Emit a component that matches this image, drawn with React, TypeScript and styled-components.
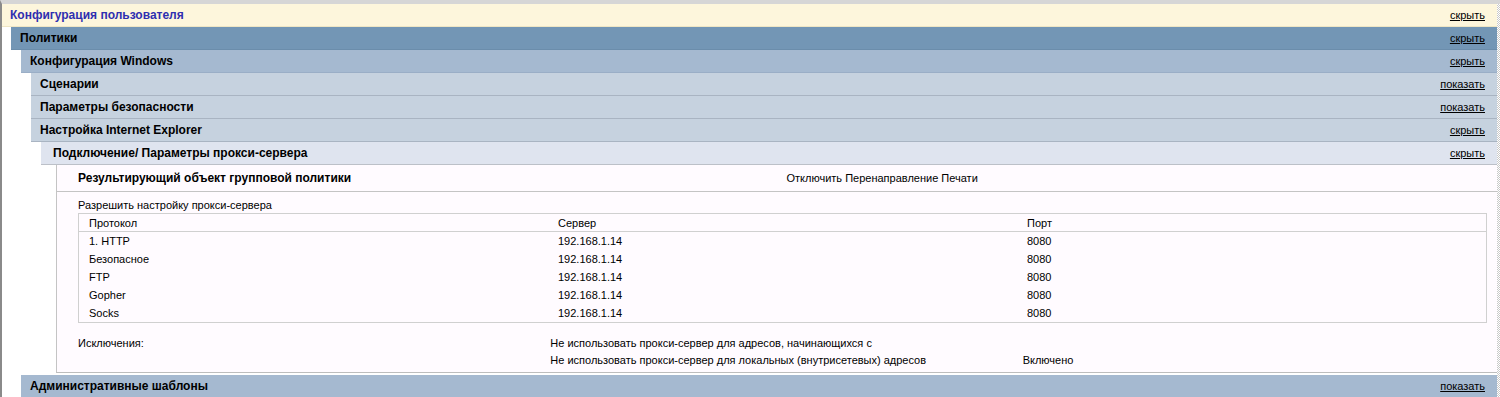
import React from "react";
import styled, { createGlobalStyle } from "styled-components";

type Level = "root" | "policy" | "windows" | "group" | "leaf";

interface HeaderTheme {
	bg: string;
	line: string;
	pad: number;
	color: string;
}

const headerThemes: Record<Level, HeaderTheme> = {
	root: { bg: "#fdf6dc", line: "#efe6c4", pad: 8, color: "#2f2fb0" },
	policy: { bg: "#7396b5", line: "#6b8dab", pad: 9, color: "#000" },
	windows: { bg: "#a5b9d0", line: "#9aaec6", pad: 9, color: "#000" },
	group: { bg: "#c6d2df", line: "#a9b4c2", pad: 9, color: "#000" },
	leaf: { bg: "#dfe4ef", line: "#bcc0c8", pad: 12, color: "#000" },
};

const proxies = [
	{ protocol: "1. HTTP", server: "192.168.1.14", port: "8080" },
	{ protocol: "Безопасное", server: "192.168.1.14", port: "8080" },
	{ protocol: "FTP", server: "192.168.1.14", port: "8080" },
	{ protocol: "Gopher", server: "192.168.1.14", port: "8080" },
	{ protocol: "Socks", server: "192.168.1.14", port: "8080" },
];

const SectionHeader: React.FC<{ level: Level; title: string; open: boolean }> = ({
	level,
	title,
	open,
}) => (
	<Header $level={level}>
		<HeaderTitle $level={level}>{title}</HeaderTitle>
		<ToggleLink href="#">{open ? "скрыть" : "показать"}</ToggleLink>
	</Header>
);

const ProxySettings: React.FC = () => (
	<Details>
		<ResultRow>
			<ResultLabel>Результирующий объект групповой политики</ResultLabel>
			<span>Отключить Перенаправление Печати</span>
		</ResultRow>
		<Settings>
			<SettingLabel>Разрешить настройку прокси-сервера</SettingLabel>
			<Table>
				<TableHead>
					<Cell>Протокол</Cell>
					<Cell>Сервер</Cell>
					<Cell>Порт</Cell>
				</TableHead>
				{proxies.map((p) => (
					<TableRow key={p.protocol}>
						<Cell>{p.protocol}</Cell>
						<Cell>{p.server}</Cell>
						<Cell>{p.port}</Cell>
					</TableRow>
				))}
			</Table>
			<Exceptions>
				<span>Исключения:</span>
				<span>Не использовать прокси-сервер для адресов, начинающихся с</span>
				<span />
				<span />
				<span>Не использовать прокси-сервер для локальных (внутрисетевых) адресов</span>
				<span>Включено</span>
			</Exceptions>
		</Settings>
	</Details>
);

const App: React.FC = () => (
	<>
		<GlobalStyle />
		<Frame>
			<Main>
				<SectionHeader level="root" title="Конфигурация пользователя" open />
				<Nested $indent={9}>
					<SectionHeader level="policy" title="Политики" open />
					<Nested $indent={10}>
						<SectionHeader level="windows" title="Конфигурация Windows" open />
						<Nested $indent={10}>
							<SectionHeader level="group" title="Сценарии" open={false} />
							<SectionHeader level="group" title="Параметры безопасности" open={false} />
							<SectionHeader level="group" title="Настройка Internet Explorer" open />
							<Nested $indent={10}>
								<SectionHeader level="leaf" title="Подключение/ Параметры прокси-сервера" open />
								<ProxySettings />
							</Nested>
						</Nested>
						<SectionHeader level="windows" title="Административные шаблоны" open={false} />
					</Nested>
				</Nested>
			</Main>
			<ScrollEdge />
		</Frame>
	</>
);

export default App;

const GlobalStyle = createGlobalStyle`
	body {
		margin: 0;
		background: #ffffff;
		font-family: "Liberation Sans", Arial, sans-serif;
		font-size: 11px;
		color: #000;
	}
	* {
		box-sizing: border-box;
	}
`;

const Frame = styled.div`
	display: flex;
	width: 1500px;
	height: 397px;
	overflow: hidden;
	border-top: 4px solid #d6d6d6;
	border-left: 2px solid #8a8a8a;
`;

const Main = styled.div`
	flex: 1;
	min-width: 0;
`;

const ScrollEdge = styled.div`
	width: 3px;
	background-color: #ffffff;
	background-image: repeating-conic-gradient(#c8c8c8 0% 25%, #ffffff 0% 50%);
	background-size: 2px 2px;
`;

const Nested = styled.div<{ $indent: number }>`
	padding-left: ${({ $indent }) => $indent}px;
`;

const Header = styled.div<{ $level: Level }>`
	display: flex;
	align-items: center;
	justify-content: space-between;
	height: 23px;
	padding: 0 12px 0 ${({ $level }) => headerThemes[$level].pad}px;
	background: ${({ $level }) => headerThemes[$level].bg};
	border-bottom: 1px solid ${({ $level }) => headerThemes[$level].line};
`;

const HeaderTitle = styled.span<{ $level: Level }>`
	font-size: 12px;
	font-weight: bold;
	color: ${({ $level }) => headerThemes[$level].color};
`;

const ToggleLink = styled.a`
	font-size: 11px;
	color: #000;
	text-decoration: underline;
`;

const Details = styled.div`
	margin: 0 0 2px 15px;
	background: #fffbff;
	border-left: 1px solid #c4c4c4;
	border-bottom: 1px solid #bdbdbd;
`;

const ResultRow = styled.div`
	display: grid;
	grid-template-columns: 1fr 1fr;
	align-items: center;
	height: 27px;
	padding: 0 2px 0 21px;
	border-bottom: 1px solid #c4c4c4;
`;

const ResultLabel = styled.span`
	font-size: 12px;
	font-weight: bold;
`;

const Settings = styled.div`
	padding: 5px 2px 4px 21px;
`;

const SettingLabel = styled.div`
	height: 16px;
	line-height: 16px;
`;

const Table = styled.div`
	margin-right: 8px;
	border: 1px solid #d0d0d0;
`;

const TableHead = styled.div`
	display: grid;
	grid-template-columns: 1fr 1fr 1fr;
	height: 18px;
	align-items: center;
	border-bottom: 1px solid #d0d0d0;
`;

const TableRow = styled.div`
	display: grid;
	grid-template-columns: 1fr 1fr 1fr;
	height: 18px;
	align-items: center;
`;

const Cell = styled.span`
	padding-left: 10px;
`;

const Exceptions = styled.div`
	display: grid;
	grid-template-columns: 1fr 1fr 1fr;
	grid-auto-rows: 17px;
	align-items: center;
	padding-top: 11px;
`;
